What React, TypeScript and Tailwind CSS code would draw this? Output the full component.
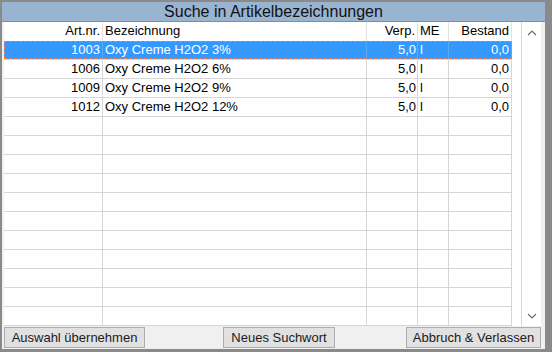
import React from "react";

interface IArtikel {
    nr: string;
    name: string;
    verp: string;
    me: string;
    bestand: string;
}

const artikel: IArtikel[] = [
    { nr: "1003", name: "Oxy Creme H2O2 3%", verp: "5,0", me: "l", bestand: "0,0" },
    { nr: "1006", name: "Oxy Creme H2O2 6%", verp: "5,0", me: "l", bestand: "0,0" },
    { nr: "1009", name: "Oxy Creme H2O2 9%", verp: "5,0", me: "l", bestand: "0,0" },
    { nr: "1012", name: "Oxy Creme H2O2 12%", verp: "5,0", me: "l", bestand: "0,0" },
];

const TOTAL_ROWS = 15;

const GridRow = ({ item, selected }: { item?: IArtikel; selected?: boolean }) => {
    const line = selected ? "border-[#5aa9f5]" : "border-[#d6d6d6]";
    return (
        <div
            className={`relative flex h-[19px] shrink-0 border-b border-[#d6d6d6] leading-[18px] ${
                selected ? "bg-[#3399ff] text-white" : "bg-white text-black"
            }`}
        >
            <div className={`w-[99px] border-r ${line} pr-[2px] text-right`}>{item?.nr}</div>
            <div className={`w-[264px] border-r ${line} pl-[2px] whitespace-nowrap`}>{item?.name}</div>
            <div className={`w-[51px] border-r ${line} pr-[1px] text-right`}>{item?.verp}</div>
            <div className={`w-[31px] border-r ${line} pl-[2px]`}>{item?.me}</div>
            <div className={`w-[63px] border-r ${line} pr-[2px] text-right`}>{item?.bestand}</div>
            {selected && (
                <div className="absolute inset-0 border border-dashed border-[#f27c55]" />
            )}
        </div>
    );
};

const Chevron = ({ up }: { up?: boolean }) => (
    <svg width="10" height="6" viewBox="0 0 10 6" fill="none">
        <polyline
            points={up ? "1,5 5,1 9,5" : "1,1 5,5 9,1"}
            stroke="#707070"
            strokeWidth="1.2"
        />
    </svg>
);

const WinButton = ({ label, className }: { label: string; className?: string }) => (
    <button
        className={`h-[21px] border border-[#adadad] bg-[#e1e1e1] px-[5px] text-[13px] leading-[19px] text-[#1a1a1a] ${
            className ?? ""
        }`}
    >
        {label}
    </button>
);

export default function App() {
    const rows = Array.from({ length: TOTAL_ROWS }, (_, i) => artikel[i]);

    return (
        <div
            className="box-border flex h-[352px] w-[552px] flex-col border-b-[3px] border-l-2 border-r-[7px] border-t-2 border-[#8a8a8a] bg-[#f0f0f0]"
            style={{ fontFamily: '"Liberation Sans", Arial, sans-serif' }}
        >
            {/* title */}
            <div className="flex h-[20px] shrink-0 items-center justify-center border-b border-[#8a8a8a] bg-[#99b4d1] text-[16px] leading-[19px] text-[#111]">
                Suche in Artikelbezeichnungen
            </div>

            {/* grid */}
            <div className="flex h-[304px] shrink-0 pl-[2px] pr-[4px] text-[13px]">
                <div className="flex w-[508px] flex-col bg-white">
                    <div className="flex h-[19px] shrink-0 leading-[18px] text-black">
                        <div className="w-[99px] border-r border-[#e2e2e2] pr-[2px] text-right">Art.nr.</div>
                        <div className="w-[264px] border-r border-[#e2e2e2] pl-[2px]">Bezeichnung</div>
                        <div className="w-[51px] border-r border-[#e2e2e2] pr-[2px] text-right">Verp.</div>
                        <div className="w-[31px] border-r border-[#e2e2e2] pl-[2px]">ME</div>
                        <div className="w-[63px] border-r border-[#e2e2e2] pr-[2px] text-right">Bestand</div>
                    </div>
                    {rows.map((item, i) => (
                        <GridRow key={i} item={item} selected={i === 0} />
                    ))}
                </div>
                <div className="w-[9px] bg-white" />
                <div className="flex w-[20px] flex-col justify-between border-l border-[#d6d6d6] bg-white">
                    <div className="flex h-[20px] items-center justify-center pt-[1px]">
                        <Chevron up />
                    </div>
                    <div className="flex h-[20px] items-center justify-center">
                        <Chevron />
                    </div>
                </div>
            </div>

            {/* buttons */}
            <div className="flex pl-[2px] pr-[4px] pt-[1px]">
                <WinButton label="Auswahl übernehmen" className="w-[141px]" />
                <WinButton label="Neues Suchwort" className="ml-[78px] w-[112px]" />
                <WinButton label="Abbruch & Verlassen" className="ml-auto w-[135px]" />
            </div>
        </div>
    );
}
